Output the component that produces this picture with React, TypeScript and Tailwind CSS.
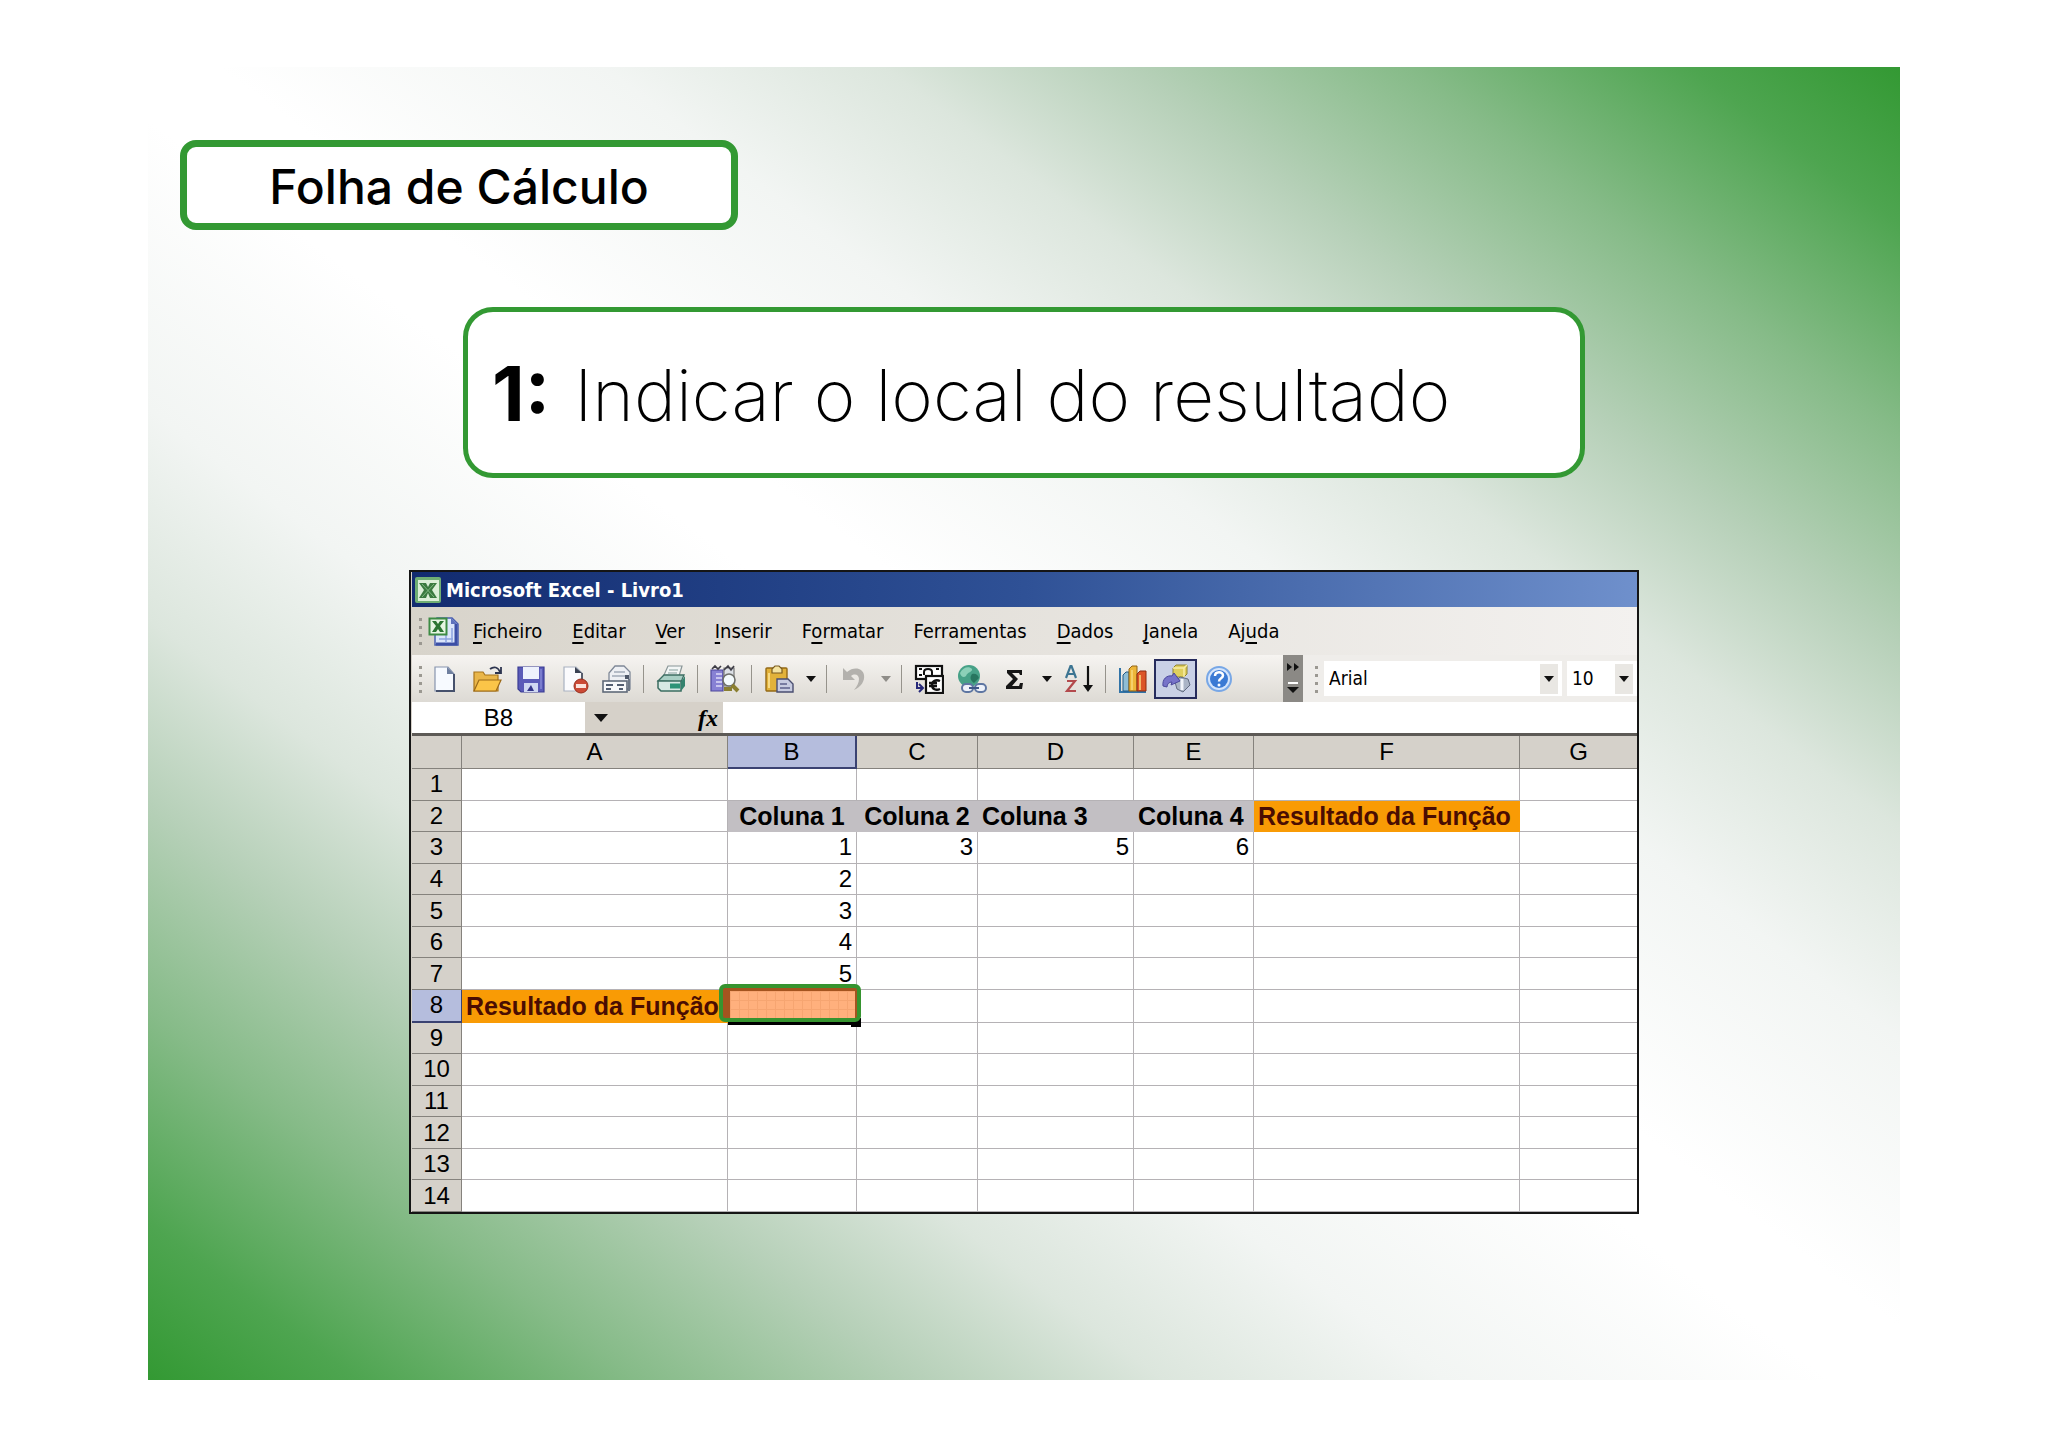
import { useState } from "react";
import type { ReactNode } from "react";

type Tool = {
  kind: "button" | "arrow" | "separator";
  label?: string;
  icon?: ReactNode;
  active?: boolean;
  disabled?: boolean;
};

type Cell = {
  text: string;
  className: string;
};

const MENU: [string, string, string][] = [
  ["", "F", "icheiro"],
  ["", "E", "ditar"],
  ["", "V", "er"],
  ["", "I", "nserir"],
  ["F", "o", "rmatar"],
  ["Ferra", "m", "entas"],
  ["", "D", "ados"],
  ["", "J", "anela"],
  ["Aj", "u", "da"],
];

const COLUMNS = ["A", "B", "C", "D", "E", "F", "G"];
const ROWS = Array.from({ length: 14 }, (_, i) => i + 1);

const GREY = "bg-[#c2bfc3] border-[#c2bfc3] text-[25px] font-bold";
const ORANGE = "bg-[#f99b05] border-[#f99b05] text-[25px] font-bold text-[#4a0d02]";

const CELLS: Record<string, Cell> = {
  B2: { text: "Coluna 1", className: `${GREY} text-center` },
  C2: { text: "Coluna 2", className: `${GREY} text-center` },
  D2: { text: "Coluna 3", className: GREY },
  E2: { text: "Coluna 4", className: GREY },
  F2: { text: "Resultado da Função", className: ORANGE },
  B3: { text: "1", className: "text-right" },
  C3: { text: "3", className: "text-right" },
  D3: { text: "5", className: "text-right" },
  E3: { text: "6", className: "text-right" },
  B4: { text: "2", className: "text-right" },
  B5: { text: "3", className: "text-right" },
  B6: { text: "4", className: "text-right" },
  B7: { text: "5", className: "text-right" },
  A8: { text: "Resultado da Função", className: ORANGE },
};

function Icon({ children }: { children: ReactNode }) {
  return (
    <svg viewBox="0 0 30 30" className="h-[30px] w-[30px]" aria-hidden="true">
      {children}
    </svg>
  );
}

function Caret({ muted = false }: { muted?: boolean }) {
  return (
    <svg viewBox="0 0 10 6" className="h-[6px] w-[10px]" aria-hidden="true">
      <path d="M0 0h10L5 6z" fill={muted ? "#8f8d88" : "#111"} />
    </svg>
  );
}

function Grip() {
  return (
    <svg viewBox="0 0 4 28" className="h-7 w-1 shrink-0" aria-hidden="true">
      {[1, 9, 17, 25].map((y) => (
        <rect key={y} x="0" y={y} width="3" height="3" fill="#9b9891" />
      ))}
    </svg>
  );
}

function ExcelLogo() {
  return (
    <svg viewBox="0 0 28 28" className="h-7 w-7 shrink-0" aria-hidden="true">
      <rect x="1" y="1" width="26" height="26" rx="2" fill="#6fae74" />
      <rect x="4" y="4" width="21" height="21" fill="#dcefd8" />
      <path d="M5 7h7l2 4 2-4h7l-5 7 5 8h-7l-2-5-2 5H5l5-8z" fill="#3b7a40" />
      <path d="M8 8l12 13M20 8L8 21" stroke="#7fb981" strokeWidth="1" />
    </svg>
  );
}

function WorkbookLogo() {
  return (
    <svg viewBox="0 0 32 30" className="h-[30px] w-8 shrink-0" aria-hidden="true">
      <path d="M9 2h15l6 6v21H7V20z" fill="#dbe6fb" stroke="#4a5fb0" strokeWidth="1.5" />
      <path d="M28 8v20H8" fill="none" stroke="#3c4fa5" strokeWidth="3" />
      <path d="M23 2v6h6" fill="#5e72bd" />
      <path d="M11 23h14M18 19v8M24 12v14" stroke="#8da4e0" strokeWidth="1.5" />
      <rect x="1.5" y="2.5" width="17" height="16" fill="#e6f5e3" stroke="#3d8b44" strokeWidth="2" />
      <path d="M4 5h4l2 3 2-3h4l-4 5 4 6h-4l-2-3-2 3H4l4-6z" fill="#2c7533" />
    </svg>
  );
}

const TOOLS: Tool[] = [
  {
    kind: "button",
    label: "Novo",
    icon: (
      <Icon>
        <path d="M5 3h13l6 7v17H5z" fill="#f7faff" stroke="#8794ae" strokeWidth="1.2" />
        <path d="M24 10v17H6" fill="none" stroke="#46516c" strokeWidth="2" />
        <path d="M17 3v7h7z" fill="#6f7f9f" />
      </Icon>
    ),
  },
  {
    kind: "button",
    label: "Abrir",
    icon: (
      <Icon>
        <path d="M1 8h9l2 3h13v16H1z" fill="#e9b64a" stroke="#a8741b" strokeWidth="1.2" />
        <path d="M6 16h22l-5 11H1z" fill="#fbc548" stroke="#9c6a18" strokeWidth="1.2" />
        <path d="M17 5c4-3 8-2 10 3M28 3v6h-6" fill="none" stroke="#2d3550" strokeWidth="1.8" />
      </Icon>
    ),
  },
  {
    kind: "button",
    label: "Guardar",
    icon: (
      <Icon>
        <path d="M2 3h26v25H5l-3-3z" fill="#5a5bb8" stroke="#3b3d94" strokeWidth="1.2" />
        <rect x="7" y="3" width="16" height="12" fill="#edf1fc" />
        <rect x="8" y="19" width="14" height="9" fill="#cfd8f2" />
        <path d="M11 27l4-6 3 6z" fill="#34368a" />
        <path d="M25 5v20" stroke="#8688d6" strokeWidth="1.5" />
      </Icon>
    ),
  },
  {
    kind: "button",
    label: "Permissão",
    icon: (
      <Icon>
        <path d="M5 3h12l6 6v18H5z" fill="#fbfbfd" stroke="#a9b2c1" strokeWidth="1.2" />
        <path d="M16 3v6h7z" fill="#3a4152" />
        <path d="M23 9v9" stroke="#3a4152" strokeWidth="1.6" />
        <circle cx="22" cy="22" r="7" fill="#cb4a36" stroke="#98301f" strokeWidth="1" />
        <rect x="17" y="20" width="10" height="4" fill="#fbe3dc" />
      </Icon>
    ),
  },
  {
    kind: "button",
    label: "Correio",
    icon: (
      <Icon>
        <path d="M7 16V9l6-7h9l6 6v17H7z" fill="#eef0f4" stroke="#7f8897" strokeWidth="1.3" />
        <path d="M12 8h11M10 12h13" stroke="#a3abb8" strokeWidth="1.4" />
        <rect x="23" y="11" width="4" height="4" fill="#4f5869" />
        <rect x="1" y="17" width="24" height="11" fill="#f6f7f9" stroke="#5f6979" strokeWidth="1.6" />
        <path d="M4 21h7M4 25h5M15 21h7M17 25h4" stroke="#525d70" strokeWidth="1.8" />
        <path d="M27 15v12" stroke="#6e7887" strokeWidth="2" />
      </Icon>
    ),
  },
  { kind: "separator" },
  {
    kind: "button",
    label: "Imprimir",
    icon: (
      <Icon>
        <path d="M8 11l4-9h14l-3 10z" fill="#f3f6f6" stroke="#8a9697" strokeWidth="1.2" />
        <path d="M13 6h9M12 9h9" stroke="#87a09d" strokeWidth="1.2" />
        <path d="M2 17l6-6h20l-3 7z" fill="#a9cfc5" stroke="#3c6d62" strokeWidth="1.3" />
        <path d="M2 17h23v10H5l-3-3z" fill="#d7e9e4" stroke="#3c6d62" strokeWidth="1.5" />
        <path d="M25 18l4-6v10l-4 5z" fill="#35826e" />
        <path d="M14 22h10" stroke="#2d9478" strokeWidth="5" />
      </Icon>
    ),
  },
  { kind: "separator" },
  {
    kind: "button",
    label: "Pesquisar",
    icon: (
      <Icon>
        <path d="M1 6h12v21H1z" fill="#8781d4" stroke="#4e499c" strokeWidth="1.2" />
        <path d="M6 10h6M6 14h6M6 18h6M6 22h6" stroke="#dedcf7" strokeWidth="1.6" />
        <path d="M14 4h10v18H14z" fill="#dce0e6" stroke="#777" strokeWidth="1.2" />
        <path d="M2 5l3-3 3 3 3-3M14 6l4-4 3 4 3-4" fill="none" stroke="#3d3b45" strokeWidth="1.6" />
        <circle cx="19" cy="16" r="6" fill="#f3fafc" stroke="#6e6f6a" strokeWidth="1.6" />
        <path d="M14 25h8M22 21l6 6" stroke="#8a7f31" strokeWidth="4" />
      </Icon>
    ),
  },
  { kind: "separator" },
  {
    kind: "button",
    label: "Colar",
    icon: (
      <Icon>
        <rect x="2" y="4" width="21" height="23" rx="1" fill="#e2b23a" stroke="#946a17" strokeWidth="1.4" />
        <path d="M8 9V5l3-3h4l3 3v4z" fill="#f4e3a0" stroke="#7a5b1e" strokeWidth="1.2" />
        <path d="M5 9v15" stroke="#f7da83" strokeWidth="2" />
        <path d="M13 15h11l5 5v8H13z" fill="#c7cbe0" stroke="#4a4e70" strokeWidth="1.4" />
        <path d="M16 20h7M16 24h10" stroke="#5d618a" strokeWidth="1.5" />
      </Icon>
    ),
  },
  { kind: "arrow", label: "Opções de colar" },
  { kind: "separator" },
  {
    kind: "button",
    label: "Anular",
    disabled: true,
    icon: (
      <Icon>
        <path d="M4 4v12h12l-4-4c4-3 8-1 8 3 0 4-2 7-5 11 7-3 11-9 10-15C24 4 15 2 8 8z" fill="#b3b1ad" />
      </Icon>
    ),
  },
  { kind: "arrow", label: "Opções de anular", disabled: true },
  { kind: "separator" },
  {
    kind: "button",
    label: "Conversão para euro",
    icon: (
      <Icon>
        <rect x="2" y="2" width="26" height="13" fill="#fff" stroke="#111" strokeWidth="2.2" />
        <path d="M10 11V8c0-4 8-4 8 0v3" fill="none" stroke="#111" strokeWidth="2" />
        <path d="M5 5h3M22 5h3M5 11h3" stroke="#111" strokeWidth="2" />
        <rect x="12" y="12" width="17" height="17" fill="#fff" stroke="#111" strokeWidth="2.2" />
        <path d="M26 17c-4-2-8 0-8 4s4 6 8 4M15 19h8M15 22h8" fill="none" stroke="#111" strokeWidth="2.4" />
        <path d="M3 18v6h5M5 20l4 4-4 4" fill="none" stroke="#27297a" strokeWidth="2" />
      </Icon>
    ),
  },
  {
    kind: "button",
    label: "Inserir hiperligação",
    icon: (
      <Icon>
        <circle cx="12" cy="12" r="11" fill="#47a187" />
        <path d="M3 9c3-6 9-7 12-4 1 3-5 3-6 7-2 2-5 1-6-3z" fill="#8cd0b8" />
        <path d="M15 10c4-1 6 1 7 4l-5 5c-3-2-5-5-2-9z" fill="#28765f" />
        <rect x="5" y="20" width="11" height="8" rx="4" fill="#eef2fa" stroke="#5e76a2" strokeWidth="2" />
        <rect x="18" y="20" width="11" height="8" rx="4" fill="#eef2fa" stroke="#5e76a2" strokeWidth="2" />
        <path d="M12 24h10" stroke="#3f5788" strokeWidth="2" />
      </Icon>
    ),
  },
  {
    kind: "button",
    label: "Soma automática",
    icon: (
      <Icon>
        <path d="M7 6h15v5h-2l-1-2h-7l6 6-6 7h7l1-3h3l-1 6H6v-3l7-7-6-6z" fill="#151515" />
      </Icon>
    ),
  },
  { kind: "arrow", label: "Opções de soma" },
  {
    kind: "button",
    label: "Ordenação ascendente",
    icon: (
      <Icon>
        <path d="M2 14L6.500 2h1L12 14M4 10h6" fill="none" stroke="#3d7592" strokeWidth="2.200" />
        <path d="M3 17h8L3 27h9" fill="none" stroke="#b34a4d" strokeWidth="2.200" />
        <path d="M24 2v24" stroke="#111" strokeWidth="2.200" />
        <path d="M19 21h10l-5 7z" fill="#111" />
      </Icon>
    ),
  },
  { kind: "separator" },
  {
    kind: "button",
    label: "Assistente de gráficos",
    icon: (
      <Icon>
        <path d="M2 4v24h26" fill="none" stroke="#3274a8" strokeWidth="2" />
        <path d="M5 11l3-3h3v19H5z" fill="#8fbdd6" stroke="#235a86" />
        <path d="M11 5l3-3h5v25h-8z" fill="#edb638" stroke="#936414" />
        <path d="M19 10l3-3h6v20h-9z" fill="#dc5527" stroke="#8e2c10" />
        <path d="M14 6v20M22 11v15" stroke="#f8d97c" strokeWidth="1.5" />
      </Icon>
    ),
  },
  {
    kind: "button",
    label: "Desenho",
    active: true,
    icon: (
      <Icon>
        <path d="M12 4l3-3h11v9l-3 3H12z" fill="#e0cf5e" stroke="#8e8230" />
        <path d="M12 4h11v9M23 4l3-3" fill="none" stroke="#f6eda8" strokeWidth="1.5" />
        <path d="M19 13l8 2 2 6-7 7-6-3-2-7z" fill="#aab4c6" stroke="#626c82" />
        <path d="M21 15v11" stroke="#f1f4fb" strokeWidth="3" />
        <path d="M2 22c-1-7 4-11 9-10l2-3 6 8-9 4 1-3c-3 0-5 2-5 5z" fill="#7773c9" stroke="#4b489c" />
      </Icon>
    ),
  },
  {
    kind: "button",
    label: "Ajuda do Microsoft Excel",
    icon: (
      <Icon>
        <circle cx="15" cy="15" r="12" fill="#d5e5fb" stroke="#78a7e6" strokeWidth="2" />
        <circle cx="15" cy="15" r="9" fill="#3b7ad4" />
        <path d="M11 12c0-5 8-5 8-.5 0 3-4 2.500-4 6" fill="none" stroke="#fff" strokeWidth="2.500" />
        <circle cx="15" cy="21" r="1.500" fill="#fff" />
      </Icon>
    ),
  },
];

function ToolItem({ tool }: { tool: Tool }) {
  if (tool.kind === "separator") {
    return (
      <div className="flex w-[11px] shrink-0 justify-center">
        <div className="h-7 w-px bg-[#96938c]" />
      </div>
    );
  }

  if (tool.kind === "arrow") {
    return (
      <button
        type="button"
        aria-label={tool.label}
        disabled={tool.disabled}
        className="flex h-10 w-[21px] shrink-0 items-center justify-center"
      >
        <Caret muted={tool.disabled} />
      </button>
    );
  }

  return (
    <button
      type="button"
      aria-label={tool.label}
      disabled={tool.disabled}
      className={
        tool.active
          ? "flex h-10 w-[43px] shrink-0 items-center justify-center border-2 border-[#262b5c] bg-[#c9d0e6]"
          : "flex h-10 w-[43px] shrink-0 items-center justify-center"
      }
    >
      {tool.icon}
    </button>
  );
}

function Toolbar() {
  const [font, setFont] = useState("Arial");
  const [size, setSize] = useState("10");

  return (
    <div className="flex h-[47px] items-center bg-linear-to-b from-[#f6f4f1] to-[#dddad4] pl-[7px]">
      <Grip />
      <div className="flex flex-1 items-center">
        {TOOLS.map((tool, i) => (
          <ToolItem key={i} tool={tool} />
        ))}
      </div>
      <button
        type="button"
        aria-label="Opções da barra de ferramentas"
        className="flex h-full w-5 shrink-0 flex-col items-center justify-between bg-[#8b8985] py-2"
      >
        <svg viewBox="0 0 14 8" className="h-2 w-[14px]" aria-hidden="true">
          <path d="M1 0l5 4-5 4zM8 0l5 4-5 4z" fill="#111" />
        </svg>
        <svg viewBox="0 0 12 12" className="h-3 w-3" aria-hidden="true">
          <path d="M1 0h10v2H1z" fill="#fff" />
          <path d="M0 5h12l-6 6z" fill="#111" />
        </svg>
      </button>
      <div className="flex h-full shrink-0 items-center gap-[5px] bg-[#efedea] pl-3">
        <Grip />
        <div className="flex h-[35px] w-[238px] items-center bg-white pr-1">
          <select
            aria-label="Tipo de letra"
            value={font}
            onChange={(e) => setFont(e.target.value)}
            className="h-full flex-1 appearance-none bg-white pl-[5px] text-[19px] outline-none"
          >
            <option>Arial</option>
            <option>Tahoma</option>
          </select>
          <span className="flex h-[30px] w-[18px] items-center justify-center bg-[#e9e7e3]">
            <Caret />
          </span>
        </div>
        <div className="flex h-[35px] w-[70px] items-center bg-white pr-1">
          <select
            aria-label="Tamanho do tipo de letra"
            value={size}
            onChange={(e) => setSize(e.target.value)}
            className="h-full w-[48px] appearance-none bg-white pl-[5px] text-[19px] outline-none"
          >
            <option>10</option>
            <option>12</option>
          </select>
          <span className="flex h-[30px] w-[18px] items-center justify-center bg-[#e9e7e3]">
            <Caret />
          </span>
        </div>
      </div>
    </div>
  );
}

function FormulaBar() {
  return (
    <div className="flex h-[31px] items-stretch bg-[#d6d1c9]">
      <input
        aria-label="Caixa de nome"
        defaultValue="B8"
        className="w-[173px] bg-white text-center font-['Liberation_Sans',sans-serif] text-[24px] outline-none"
      />
      <button type="button" aria-label="Abrir caixa de nome" className="flex w-8 items-center justify-center">
        <svg viewBox="0 0 14 8" className="h-2 w-[14px]" aria-hidden="true">
          <path d="M0 0h14L7 8z" fill="#111" />
        </svg>
      </button>
      <div className="flex flex-1 items-stretch">
        <button
          type="button"
          className="w-[106px] pr-[5px] text-right font-['Liberation_Serif',serif] text-[24px] leading-[28px] font-bold italic"
        >
          fx
        </button>
        <input aria-label="Barra de fórmulas" className="flex-1 bg-white outline-none" />
      </div>
    </div>
  );
}

function SelectedMarker() {
  return (
    <>
      <div className="absolute -bottom-[3px] left-0 h-1 w-[126px] bg-black" />
      <div className="absolute -right-[5px] -bottom-[5px] h-[9px] w-[10px] bg-black" />
      <div className="absolute -top-[6px] -right-[5px] bottom-0 -left-[9px] rounded-md border-4 border-[#36942f] bg-[#a4541f] pt-[3px] pr-[2px] pl-[7px]">
        <div className="h-full bg-[#ffb07d] bg-[linear-gradient(#f6a571_1px,transparent_1px),linear-gradient(90deg,#f6a571_1px,transparent_1px)] bg-[size:9px_9px]" />
      </div>
    </>
  );
}

function Sheet() {
  return (
    <table className="h-[479px] w-full table-fixed border-separate border-spacing-0 border-t-[3px] border-[#5d5a56] font-['Liberation_Sans',sans-serif] text-[24px] leading-[28px]">
      <colgroup>
        <col className="w-[50px]" />
        <col className="w-[266px]" />
        <col className="w-[129px]" />
        <col className="w-[121px]" />
        <col className="w-[156px]" />
        <col className="w-[120px]" />
        <col className="w-[266px]" />
        <col />
      </colgroup>
      <thead>
        <tr className="h-[33px]">
          <th aria-label="Selecionar tudo" className="border-r border-b border-[#85827d] bg-[#d5d1ca]" />
          {COLUMNS.map((col) => (
            <th
              key={col}
              scope="col"
              className={
                col === "B"
                  ? "border-r-2 border-b-2 border-[#3a4272] bg-[#b5bddd] p-0 font-normal"
                  : "border-r border-b border-[#85827d] bg-[#d5d1ca] p-0 font-normal last:border-r-0"
              }
            >
              {col}
            </th>
          ))}
        </tr>
      </thead>
      <tbody>
        {ROWS.map((row) => (
          <tr key={row}>
            <th
              scope="row"
              className={
                row === 8
                  ? "border-r border-b-2 border-[#3a4272] bg-[#b5bddd] p-0 font-normal"
                  : "border-r border-b border-[#85827d] bg-[#d5d1ca] p-0 font-normal"
              }
            >
              {row}
            </th>
            {COLUMNS.map((col) => {
              const id = `${col}${row}`;
              const cell = CELLS[id];
              const filled = cell?.className.includes("bg-");
              return (
                <td
                  key={id}
                  className={`relative border-r border-b px-1 py-0 whitespace-nowrap last:border-r-0 ${
                    filled ? cell.className : `border-[#b5b2b5] bg-white ${cell?.className ?? ""}`
                  } ${id === "B8" ? "z-10" : ""}`}
                >
                  {cell?.text}
                  {id === "B8" && <SelectedMarker />}
                </td>
              );
            })}
          </tr>
        ))}
      </tbody>
    </table>
  );
}

function ExcelWindow() {
  return (
    <section className="mx-auto w-full max-w-[1230px] border-2 border-[#151515] bg-[#d6d1c9] pl-px font-['DejaVu_Sans_Condensed','DejaVu_Sans',sans-serif] text-black">
      <div className="flex h-[35px] items-center gap-1 bg-linear-to-r from-[#122b70] via-[#2f5196] to-[#6f90cc] pl-[2px]">
        <ExcelLogo />
        <h2 className="text-[20px] font-bold text-white">Microsoft Excel - Livro1</h2>
      </div>

      <div className="flex h-12 items-center bg-linear-to-r from-[#d8d4cb] to-[#f3f1ef] pl-[7px]">
        <Grip />
        <div className="flex w-[50px] pl-[5px]">
          <WorkbookLogo />
        </div>
        <nav className="flex gap-[30px]">
          {MENU.map(([before, key, after]) => (
            <button key={before + key + after} type="button" className="text-[20px]">
              {before}
              <span className="underline underline-offset-4">{key}</span>
              {after}
            </button>
          ))}
        </nav>
      </div>

      <Toolbar />
      <FormulaBar />
      <Sheet />
    </section>
  );
}

export default function App() {
  return (
    <div className="flex min-h-screen flex-col bg-white px-37 py-[67px] font-['Inter','Liberation_Sans',sans-serif] text-black">
      <main className="flex-1 bg-[linear-gradient(to_top_right,#339933_0%,#4ea550_6%,#86bb88_14%,#b6d0b8_22%,#dce6dd_29%,#f2f5f3_37%,#ffffff_48%,#ffffff_52%,#f2f5f3_63%,#dce6dd_71%,#b6d0b8_78%,#86bb88_86%,#4ea550_94%,#339933_100%)] pt-[73px] pb-20">
        <header className="ml-8 flex h-[90px] w-full max-w-[558px] items-center justify-center rounded-2xl border-[7px] border-[#339933] bg-white pt-1">
          <h1 className="text-[48px] leading-none font-medium">Folha de Cálculo</h1>
        </header>

        <div className="mx-auto mt-[77px] flex h-[171px] w-full max-w-[1122px] items-center rounded-[30px] border-[5px] border-[#339933] bg-white pl-6">
          <p className="flex items-baseline gap-6 text-[71px] leading-none font-extralight">
            <span className="text-[76px] font-bold">1:</span>
            <span>Indicar o local do resultado</span>
          </p>
        </div>

        <div className="mt-[92px]">
          <ExcelWindow />
        </div>
      </main>
    </div>
  );
}
